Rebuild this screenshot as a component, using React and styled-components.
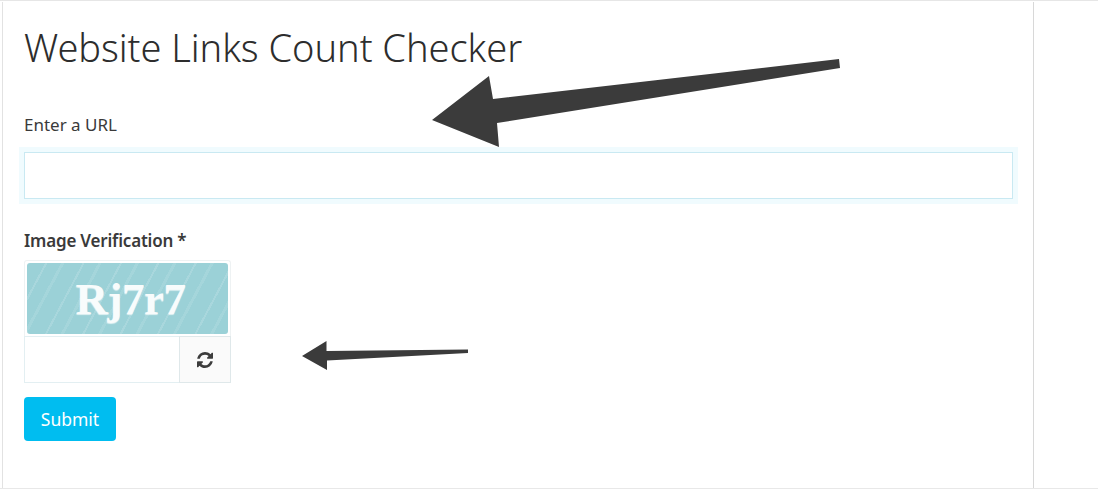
import React from 'react';
import styled, { createGlobalStyle } from 'styled-components';

const GlobalStyle = createGlobalStyle`
  html, body {
    margin: 0;
    padding: 0;
    background: #fff;
  }
  body {
    font-family: "Noto Sans", "Open Sans", "Liberation Sans", sans-serif;
    color: #333;
    overflow: hidden;
  }
`;

const Page = styled.div`
  position: relative;
  width: 1098px;
  height: 489px;
  overflow: hidden;
  box-sizing: border-box;
  padding-top: 1px;
  border-top: 1px solid #e6e6e6;
  border-bottom: 1px solid #e8e8e8;
`;

const Panel = styled.main`
  box-sizing: border-box;
  width: 1032px;
  height: 486px;
  margin-left: 2px;
  padding: 0 20px 0 21px;
  border-left: 1px solid #e2e2e2;
  border-right: 1px solid #d8d8d8;
`;

const Title = styled.h1`
  margin: 0;
  padding-top: 21px;
  font-size: 38px;
  line-height: 49px;
  font-weight: 300;
  letter-spacing: -0.05px;
  color: #2d2d2d;
`;

const Field = styled.div`
  display: flex;
  flex-direction: column;
`;

const UrlField = styled(Field)`
  margin-top: 42px;
`;

const CaptchaField = styled(Field)`
  margin-top: 31px;
`;

const Label = styled.label`
  font-size: 17px;
  line-height: 22px;
  letter-spacing: ${props => (props.$bold ? '-0.2px' : '0')};
  font-weight: ${props => (props.$bold ? 600 : 400)};
  color: #3a3a3a;
`;

const UrlInput = styled.input`
  box-sizing: border-box;
  display: block;
  width: 989px;
  height: 47px;
  margin-top: 16px;
  border: 1px solid #c9e9f2;
  background: #fff;
  outline: none;
  box-shadow: 0 0 0 5px #f0fbfe;
`;

const CaptchaBox = styled.div`
  box-sizing: border-box;
  width: 207px;
  margin-top: 8px;
  padding: 2px 2px 2px;
  border: 1px solid #eef2f3;
  border-bottom: none;
  border-radius: 3px 3px 0 0;
`;

const CaptchaImage = styled.div`
  display: flex;
  align-items: center;
  justify-content: center;
  height: 71px;
  padding-left: 6px;
  box-sizing: border-box;
  border-radius: 3px;
  background-color: #9bd1d7;
  background-image: repeating-linear-gradient(
    118deg,
    rgba(255, 255, 255, 0) 0 16px,
    rgba(255, 255, 255, 0.14) 16px 18px,
    rgba(255, 255, 255, 0) 18px 30px,
    rgba(255, 255, 255, 0.1) 30px 33px
  );
  font-family: "Liberation Serif", serif;
  font-size: 45px;
  font-weight: 700;
  letter-spacing: -0.5px;
  color: #f8fcfc;
  text-shadow: 0 1px 1px rgba(255, 255, 255, 0.7);
`;

const CaptchaRow = styled.div`
  display: flex;
  width: 207px;
  height: 47px;
`;

const CaptchaInput = styled.input`
  box-sizing: border-box;
  flex: 1;
  min-width: 0;
  height: 100%;
  border: 1px solid #e3eff2;
  border-right: none;
  background: #fff;
  outline: none;
`;

const RefreshButton = styled.button`
  box-sizing: border-box;
  display: flex;
  align-items: center;
  justify-content: center;
  width: 52px;
  height: 100%;
  padding: 0;
  border: 1px solid #dfe8ea;
  background: #fafafa;
  color: #3c3c3c;
`;

const SubmitButton = styled.button`
  display: block;
  box-sizing: border-box;
  width: 92px;
  height: 44px;
  margin-top: 14px;
  padding: 0;
  border: none;
  border-radius: 4px;
  background: #00bdf0;
  color: #fff;
  font-family: inherit;
  font-size: 17.5px;
`;

const ArrowLayer = styled.svg`
  position: absolute;
  top: 0;
  left: 0;
  pointer-events: none;
`;

function RefreshIcon() {
  return (
    <svg width="16" height="16" viewBox="128 128 1536 1536" fill="currentColor">
      <path d="M1639 1056q0 5-1 7-64 268-268 434.5t-478 166.5q-146 0-282.5-55t-243.5-157l-129 129q-19 19-45 19t-45-19-19-45v-448q0-26 19-45t45-19h448q26 0 45 19t19 45-19 45l-137 137q71 66 161 102t187 36q134 0 250-65t186-179q11-17 53-117 8-23 30-23h192q13 0 22.5 9.5t9.5 22.5zm25-800v448q0 26-19 45t-45 19h-448q-26 0-45-19t-19-45 19-45l138-138q-148-137-349-137-134 0-250 65t-186 179q-11 17-53 117-8 23-30 23h-199q-13 0-22.5-9.5t-9.5-22.5v-7q65-268 270-434.5t480-166.5q146 0 284 55.5t245 156.5l130-129q19-19 45-19t45 19 19 45z" />
    </svg>
  );
}

export default function App() {
  return (
    <Page>
      <GlobalStyle />
      <Panel>
        <Title>Website Links Count Checker</Title>
        <UrlField>
          <Label htmlFor="url">Enter a URL</Label>
          <UrlInput id="url" type="text" />
        </UrlField>
        <CaptchaField>
          <Label htmlFor="captcha" $bold>Image Verification *</Label>
          <CaptchaBox>
            <CaptchaImage>Rj7r7</CaptchaImage>
          </CaptchaBox>
          <CaptchaRow>
            <CaptchaInput id="captcha" type="text" />
            <RefreshButton type="button"><RefreshIcon /></RefreshButton>
          </CaptchaRow>
        </CaptchaField>
        <SubmitButton type="button">Submit</SubmitButton>
      </Panel>
      <ArrowLayer width="1098" height="489" viewBox="0 0 1098 489">
        <polygon
          fill="#3b3b3b"
          points="432,119 489,75 493,98 839,58 840,67 497,122 499,146"
        />
        <polygon
          fill="#3b3b3b"
          points="302,355 326.5,340 326.5,350 468,348.5 468,352 327,359.5 327,369"
        />
      </ArrowLayer>
    </Page>
  );
}
